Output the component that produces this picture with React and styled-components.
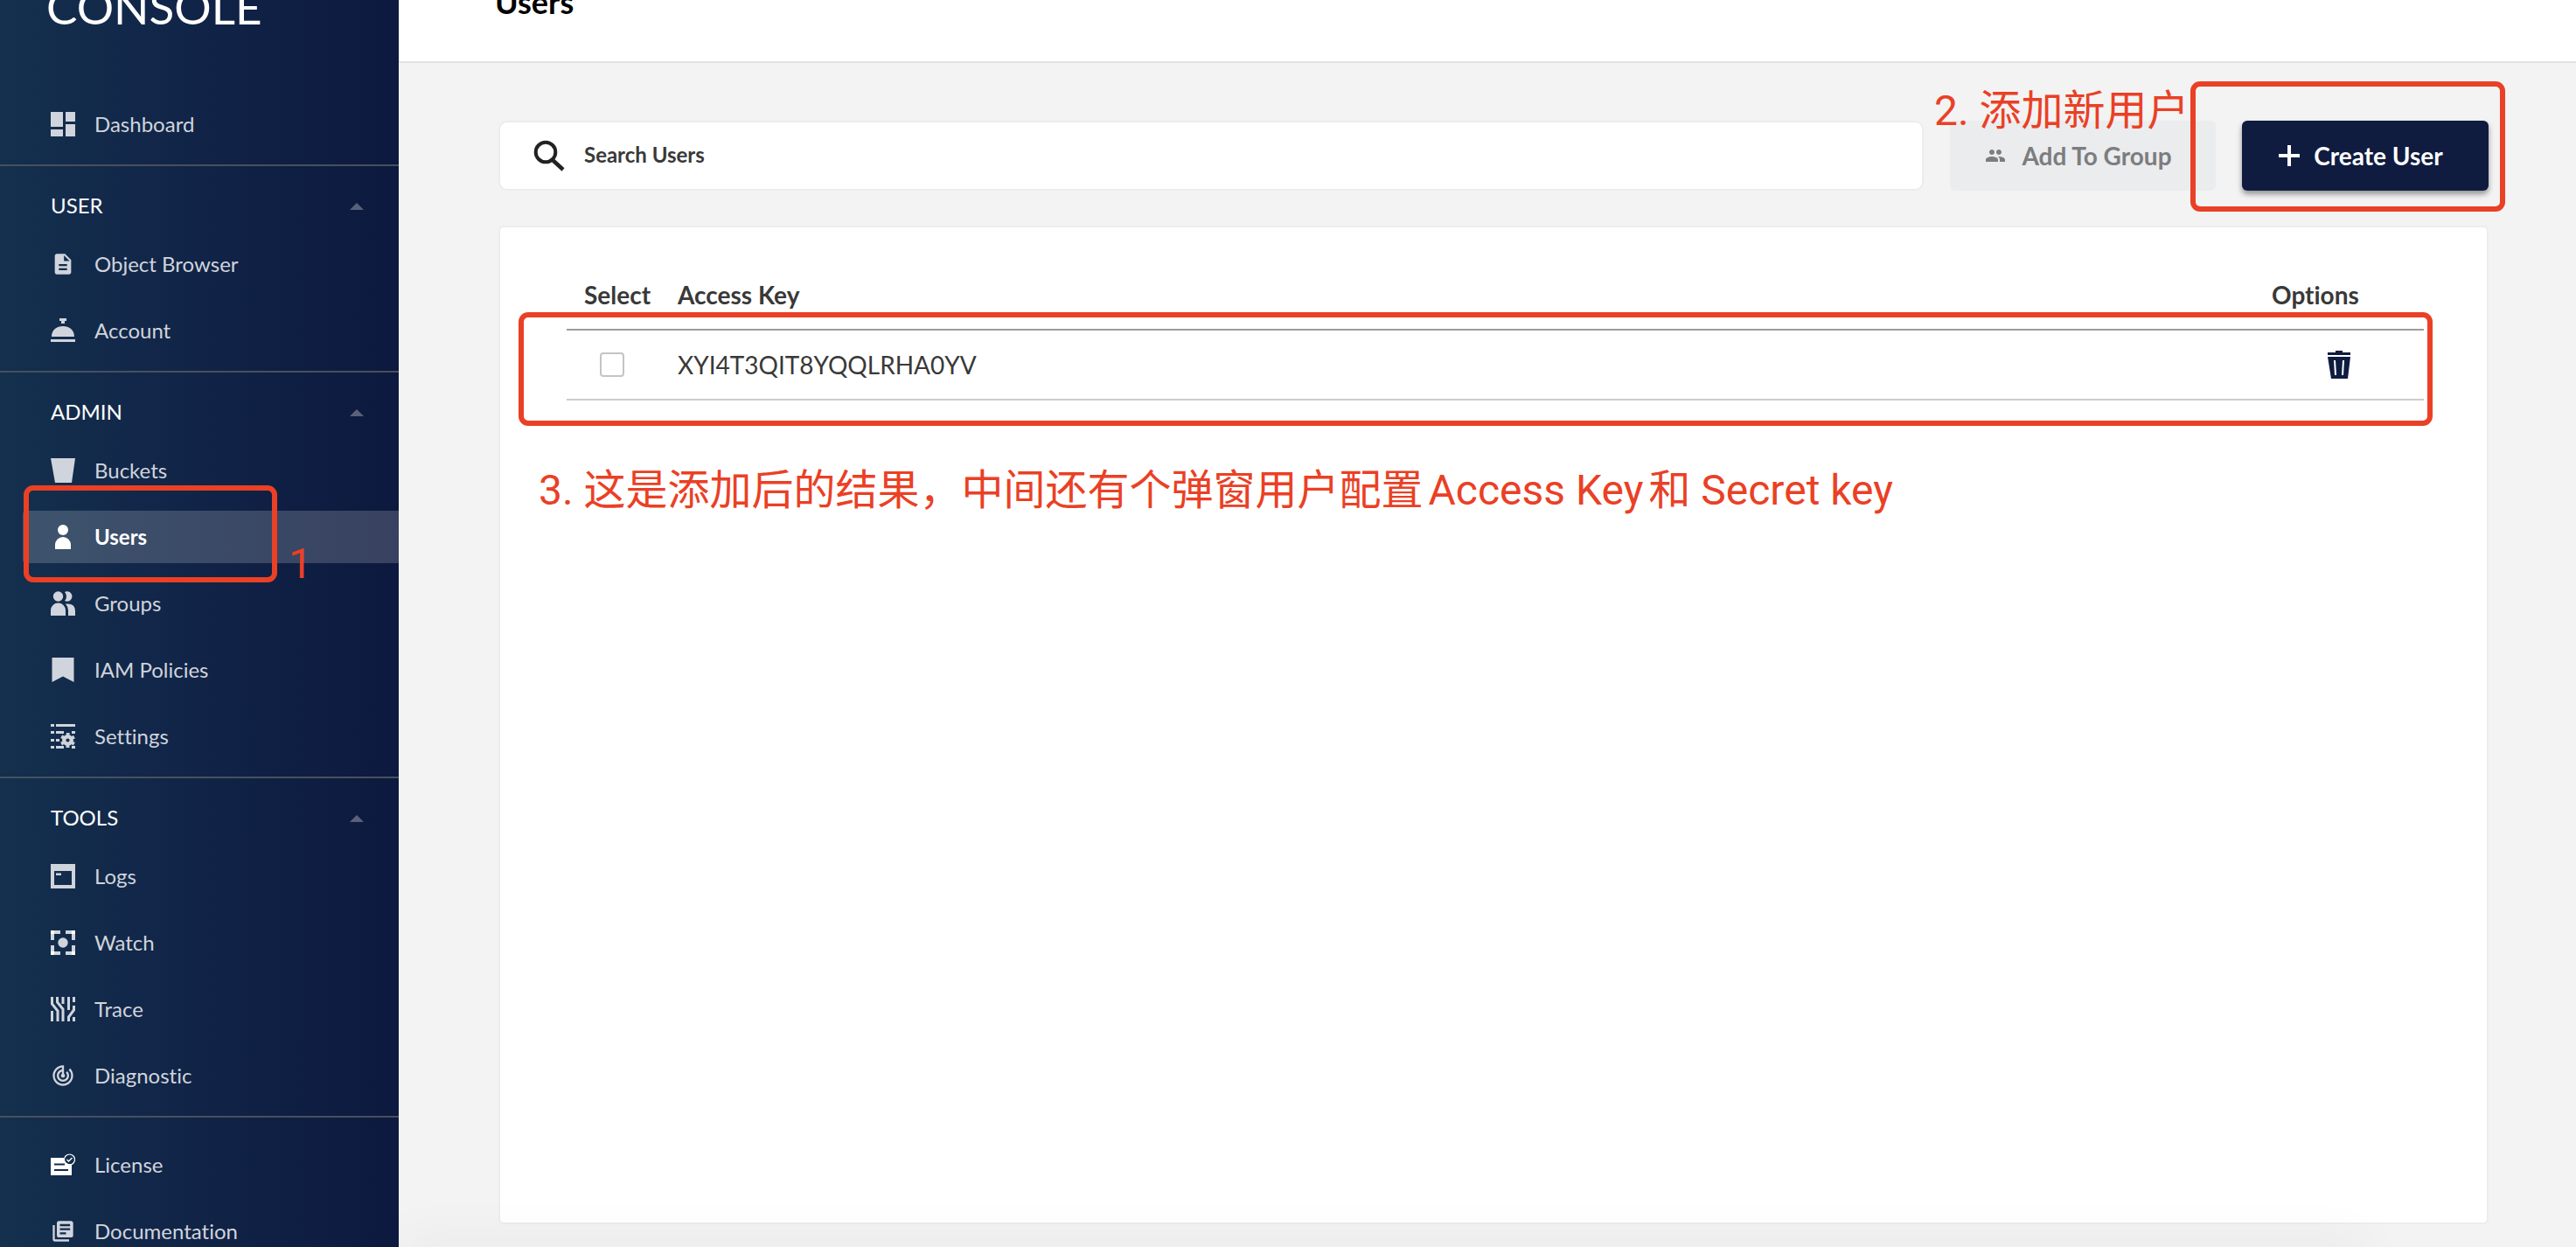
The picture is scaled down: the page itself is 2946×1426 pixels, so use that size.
import React from "react";
import styled, { createGlobalStyle, css } from "styled-components";
import { MdDescription, MdGroup, MdTrackChanges, MdLibraryBooks } from "react-icons/md";

const RED = "#ea4025";
const NAVY = "#0f1c40";

const GlobalStyle = createGlobalStyle`
  * { box-sizing: border-box; }
  body {
    margin: 0;
    background: #f3f3f3;
    font-family: Lato, "Noto Sans CJK SC", sans-serif;
    font-variant-ligatures: none;
    color: #393939;
  }
  button, input { font: inherit; font-variant-ligatures: none; }
`;

const Page = styled.div`
  display: flex;
  height: 100vh;
  overflow: hidden;
`;

/* ---------- sidebar ---------- */

const Sidebar = styled.nav`
  flex: 0 0 456px;
  overflow: hidden;
  background: linear-gradient(90deg, #14304d 0%, #12284a 32%, #0f2044 66%, #0d193e 100%);
`;

const Logo = styled.div`
  margin-top: -28px;
  padding-left: 53px;
  height: 140px;
  color: #fff;
  font-size: 53px;
  line-height: 72px;
`;

const List = styled.ul`
  display: flex;
  flex-direction: column;
  gap: 16px;
  margin: 0;
  padding: 0 0 16px 26px;
  list-style: none;
`;

const Group = styled.section`
  border-top: 2px solid #484f5e;
  padding-top: ${(p) => (p.$titled ? 10 : 24)}px;
`;

const GroupTitle = styled.button`
  display: flex;
  align-items: center;
  justify-content: space-between;
  width: 100%;
  height: 72px;
  padding: 0 40px 0 58px;
  border: 0;
  background: none;
  color: #fff;
  font-size: 24px;
  text-align: left;
`;

const Label = styled.span`
  padding-bottom: 2px;
`;

const TitleLabel = styled.span`
  padding-bottom: 4px;
`;

const Item = styled.a`
  display: flex;
  align-items: center;
  gap: 22px;
  height: 60px;
  padding-left: 32px;
  border-radius: 4px 0 0 4px;
  color: #d0d4dc;
  font-size: 24px;
  text-decoration: none;
  svg { flex: none; width: 28px; height: 28px; }
  ${(p) =>
    p.$active &&
    css`
      background: rgba(255, 255, 255, 0.18);
      color: #fff;
      font-weight: 700;
    `}
`;

/* ---------- main ---------- */

const Main = styled.main`
  position: relative;
  flex: 1;
  min-width: 0;
  display: flex;
  flex-direction: column;
  overflow: hidden;
  &::after {
    content: "";
    position: absolute;
    left: 0;
    right: 240px;
    top: 100%;
    height: 20px;
    box-shadow: 0 0 60px rgba(0, 0, 0, 0.09);
    pointer-events: none;
  }
`;

const Header = styled.header`
  height: 72px;
  padding-left: 110px;
  background: #fff;
  border-bottom: 2px solid #e2e2e2;
`;

const Title = styled.h1`
  margin: -22px 0 0;
  color: #000;
  font-size: 36px;
  line-height: 48px;
`;

const Content = styled.div`
  flex: 1;
  display: flex;
  flex-direction: column;
  gap: 40px;
  padding: 66px 100px 26px 114px;
`;

const Toolbar = styled.div`
  display: flex;
  gap: 30px;
  height: 80px;
`;

const SearchBox = styled.label`
  flex: 1;
  display: flex;
  align-items: center;
  gap: 22px;
  padding: 0 38px;
  background: #fff;
  border: 2px solid #eaedee;
  border-radius: 10px;
  svg { flex: none; width: 36px; height: 36px; }
`;

const SearchInput = styled.input`
  flex: 1;
  min-width: 0;
  padding: 0 0 4px;
  border: 0;
  outline: 0;
  background: none;
  font-size: 24px;
  font-weight: 700;
  &::placeholder { color: #393939; opacity: 1; }
`;

const ToolButton = styled.button`
  display: flex;
  align-items: center;
  justify-content: center;
  gap: ${(p) => (p.$primary ? 16 : 18)}px;
  width: ${(p) => (p.$primary ? 282 : 304)}px;
  padding: 0 10px 0 0;
  border: 0;
  border-radius: 6px;
  font-size: 28px;
  font-weight: 700;
  white-space: nowrap;
  background: ${(p) => (p.$primary ? NAVY : "#ebecee")};
  color: ${(p) => (p.$primary ? "#fff" : "#7c7d7f")};
  box-shadow: ${(p) => (p.$primary ? "0 4px 6px rgba(0, 0, 0, 0.4)" : "none")};
`;

const Panel = styled.section`
  flex: 1;
  padding: 38px 72px 0 76px;
  background: #fff;
  border: 2px solid #eaedee;
  border-radius: 6px;
`;

const Table = styled.table`
  width: 100%;
  border-collapse: collapse;
  table-layout: fixed;
  font-size: 28px;
  text-align: left;
  th { height: 79px; padding: 0; font-weight: 700; border-bottom: 2px solid #9c9c9c; }
  td { height: 80px; padding: 0; border-bottom: 2px solid #cdcdcd; }
`;

const SelectCol = styled.col` width: 127px; `;
const OptionsCol = styled.col` width: 174px; `;

const SelectHead = styled.th` && { padding-left: 20px; } `;

const Check = styled.input`
  appearance: none;
  display: block;
  width: 28px;
  height: 28px;
  margin: 0 0 0 38px;
  border: 2px solid #c4c4c4;
  border-radius: 4px;
  background: #fff;
`;

const IconButton = styled.button`
  display: block;
  margin-left: 60px;
  padding: 0;
  border: 0;
  background: none;
  svg { display: block; width: 34px; height: 34px; }
`;

/* ---------- annotations drawn over the page ---------- */

const Frame = styled.div`
  position: absolute;
  border: 6px solid ${RED};
  border-radius: 11px;
  pointer-events: none;
  left: ${(p) => p.$x}px;
  top: ${(p) => p.$y}px;
  width: ${(p) => p.$w}px;
  height: ${(p) => p.$h}px;
`;

const Note = styled.div`
  position: absolute;
  left: ${(p) => p.$x}px;
  top: ${(p) => p.$y}px;
  color: ${RED};
  font-family: Roboto, "Noto Sans CJK SC", sans-serif;
  font-size: 48px;
  line-height: 60px;
  text-autospace: normal;
  white-space: nowrap;
  pointer-events: none;
`;

/* ---------- icons ---------- */

const Svg = ({ children, size = 28 }) => (
  <svg viewBox={`0 0 ${size} ${size}`} fill="currentColor" aria-hidden="true">
    {children}
  </svg>
);

const DashboardIcon = () => (
  <Svg><path d="M0 0h14v17H0zM17 0h11v11H17zM0 20h14v8H0zM17 14h11v14H17z" /></Svg>
);
const AccountIcon = () => (
  <Svg><path d="M10 0h8v3h-2v3h-4V3h-2zM1 21C1 13 7 9 14 9s13 4 13 12zM0 24h28v3H0z" /></Svg>
);
const BucketIcon = () => (
  <Svg><path d="M0 0h28l-4 28H5z" /></Svg>
);
const UserIcon = () => (
  <Svg><circle cx="14" cy="6" r="6" /><path d="M5 28v-5a9 9 0 0 1 18 0v5z" /></Svg>
);
const GroupsIcon = () => (
  <Svg>
    <circle cx="8.500" cy="6" r="5.700" />
    <path d="M0 28v-6a8.500 8.500 0 0 1 17 0v6zM16 1a5.700 5.700 0 1 1 0 10q2-2 2-5t-2-5zM17 14.500q11-1 11 8V28h-8v-6q0-4-3-7.500z" />
  </Svg>
);
const PolicyIcon = () => (
  <Svg><path d="M1.500 0h25v28L14 21.500 1.500 28z" /></Svg>
);
const SettingsIcon = () => (
  <Svg>
    <path d="M0 0h4v3H0zM6 0h22v3H6zM0 8h4v3H0zM6 8h9v3H6zM24 8h4v3h-4zM0 17h4v3H0zM6 17h4v3H6zM0 25h4v3H0zM6 25h9v3H6zM24 25h4v3h-4z" />
    <circle cx="19.500" cy="18.500" r="4.300" fill="none" stroke="currentColor" strokeWidth="4.400" />
    <circle cx="19.500" cy="18.500" r="7" fill="none" stroke="currentColor" strokeWidth="3" strokeDasharray="3.700 3.630" strokeDashoffset="-1.800" />
  </Svg>
);
const LogsIcon = () => (
  <Svg><path fillRule="evenodd" d="M0 0h28v28H0zM4 8v16h20V8zM6 10.500h6V13H6z" /></Svg>
);
const WatchIcon = () => (
  <Svg>
    <path d="M0 0h11v4H4v7H0zM17 0h11v11h-4V4h-7zM0 17h4v7h7v4H0zM24 17h4v11H17v-4h7z" />
    <circle cx="14" cy="14" r="5.700" />
    <path fill="#fff" d="M0 0h4v4H0zM24 0h4v4h-4zM0 24h4v4H0zM24 24h4v4h-4z" />
  </Svg>
);
const TraceIcon = () => (
  <Svg>
    <g fill="none" stroke="currentColor" strokeWidth="3">
      <path d="M1.500 0v8L8 16v12M7.500 0v6l6.500 8v14M14 0v8M1.500 16v12M20.500 0v15M26.500 0v6M26.500 10v5l-6 8v5M26.500 23v5" />
    </g>
  </Svg>
);
const LicenseIcon = () => (
  <Svg>
    <path fill="#fff" fillRule="evenodd" d="M0 6h15a7 7 0 0 0 9 7v13H0zM4 12.500v2h12v-2zM4 19v2h16v-2z" />
    <circle cx="21.500" cy="8" r="6" fill="none" stroke="#fff" strokeWidth="1.200" />
    <path d="M18.500 8l2 2 4-4" fill="none" stroke="#fff" strokeWidth="1.400" />
  </Svg>
);
const SearchIcon = () => (
  <Svg size={36}>
    <circle cx="14" cy="14" r="11.300" fill="none" stroke="#222" strokeWidth="4" />
    <path d="M22 23l12 11" stroke="#222" strokeWidth="4.500" />
  </Svg>
);
const TrashIcon = () => (
  <svg viewBox="0 0 34 34" fill={NAVY} aria-hidden="true">
    <path fillRule="evenodd" d="M13 1h8v2h9v3H4V3h9zM4 8h26l-3 25H8zM11 12l1 17h2l-1-17zM21 12l-1 17h2l1-17z" />
  </svg>
);
const CaretIcon = () => (
  <svg width="16" height="8" viewBox="0 0 16 8" fill="#59617a" aria-hidden="true">
    <path d="M0 8l8-8 8 8z" />
  </svg>
);
const PlusIcon = () => (
  <svg width="24" height="24" viewBox="0 0 24 24" stroke="currentColor" strokeWidth="4" aria-hidden="true">
    <path d="M12 0v24M0 12h24" />
  </svg>
);

const GROUPS = [
  { items: [["Dashboard", DashboardIcon]] },
  { title: "USER", items: [["Object Browser", MdDescription], ["Account", AccountIcon]] },
  {
    title: "ADMIN",
    items: [
      ["Buckets", BucketIcon],
      ["Users", UserIcon],
      ["Groups", GroupsIcon],
      ["IAM Policies", PolicyIcon],
      ["Settings", SettingsIcon],
    ],
  },
  {
    title: "TOOLS",
    items: [
      ["Logs", LogsIcon],
      ["Watch", WatchIcon],
      ["Trace", TraceIcon],
      ["Diagnostic", MdTrackChanges],
    ],
  },
  { items: [["License", LicenseIcon], ["Documentation", MdLibraryBooks]] },
];

const MenuItems = ({ items }) => (
  <List>
    {items.map(([label, Icon]) => (
      <li key={label}>
        <Item href="#" $active={label === "Users"}>
          <Icon />
          <Label>{label}</Label>
        </Item>
      </li>
    ))}
  </List>
);

export default function App() {
  const [first, ...rest] = GROUPS;
  return (
    <>
      <GlobalStyle />
      <Page>
        <Sidebar>
          <Logo>CONSOLE</Logo>
          <MenuItems items={first.items} />
          {rest.map((g) => (
            <Group key={g.items[0][0]} $titled={Boolean(g.title)}>
              {g.title && (
                <GroupTitle type="button">
                  <TitleLabel>{g.title}</TitleLabel>
                  <CaretIcon />
                </GroupTitle>
              )}
              <MenuItems items={g.items} />
            </Group>
          ))}
        </Sidebar>
        <Main>
          <Header>
            <Title>Users</Title>
          </Header>
          <Content>
            <Toolbar>
              <SearchBox>
                <SearchIcon />
                <SearchInput type="text" placeholder="Search Users" aria-label="Search Users" />
              </SearchBox>
              <ToolButton type="button" disabled>
                <MdGroup size={24} />
                Add To Group
              </ToolButton>
              <ToolButton type="button" $primary>
                <PlusIcon />
                Create User
              </ToolButton>
            </Toolbar>
            <Panel>
              <Table>
                <colgroup>
                  <SelectCol />
                  <col />
                  <OptionsCol />
                </colgroup>
                <thead>
                  <tr>
                    <SelectHead>Select</SelectHead>
                    <th>Access Key</th>
                    <th>Options</th>
                  </tr>
                </thead>
                <tbody>
                  <tr>
                    <td><Check type="checkbox" aria-label="Select XYI4T3QIT8YQQLRHA0YV" /></td>
                    <td>XYI4T3QIT8YQQLRHA0YV</td>
                    <td><IconButton type="button" aria-label="Delete"><TrashIcon /></IconButton></td>
                  </tr>
                </tbody>
              </Table>
            </Panel>
          </Content>
        </Main>
      </Page>
      <Frame $x={27} $y={555} $w={290} $h={111} />
      <Note $x={330} $y={615}>1</Note>
      <Frame $x={2505} $y={93} $w={360} $h={149} />
      <Note $x={2212} $y={97}>2. 添加新用户</Note>
      <Frame $x={593} $y={357} $w={2189} $h={130} />
      <Note $x={616} $y={531}>3. 这是添加后的结果，中间还有个弹窗用户配置Access Key和 Secret key</Note>
    </>
  );
}
